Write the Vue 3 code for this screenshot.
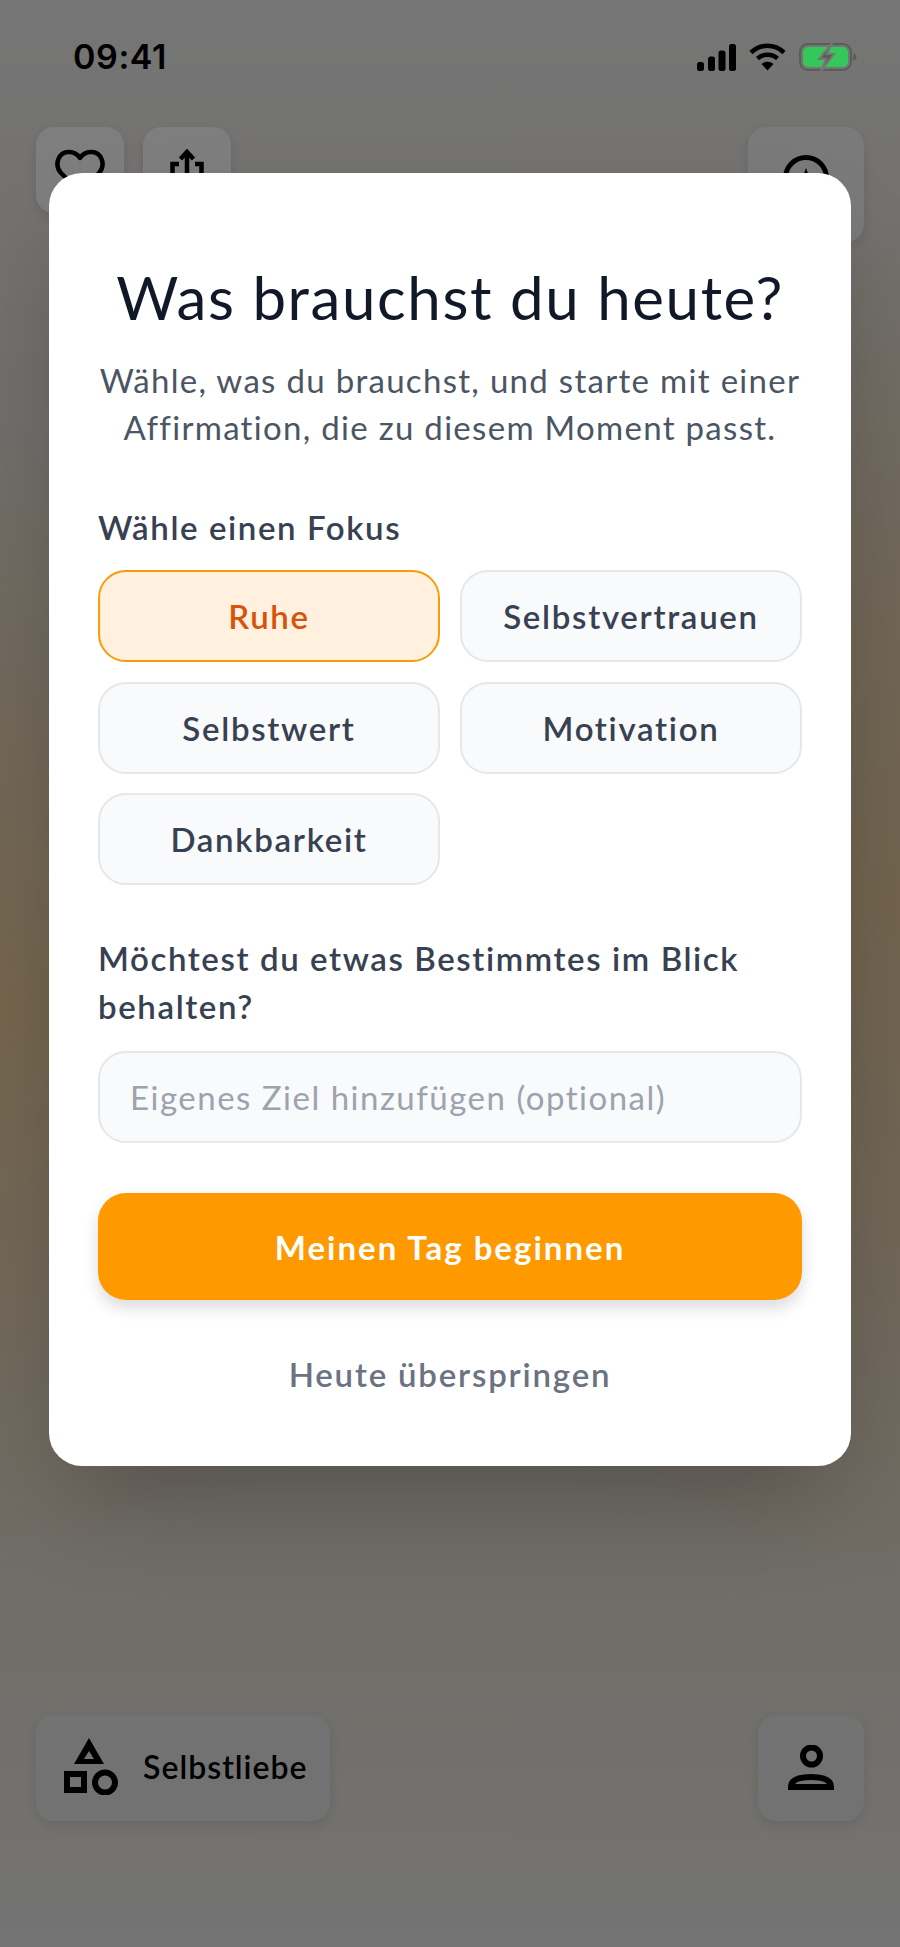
<template>
  <div class="screen">
    <!-- page behind the dialog -->
    <div class="page">
      <div class="status-bar">
        <span class="time">09:41</span>
        <div class="status-icons">
          <svg width="39" height="27" viewBox="0 0 39 27">
            <rect x="0" y="18" width="7" height="9" rx="2.5" />
            <rect x="11" y="12.500" width="7" height="14.500" rx="2.500" />
            <rect x="21.500" y="6.500" width="7" height="20.500" rx="2.500" />
            <rect x="32" y="0" width="7" height="27" rx="2.500" />
          </svg>
          <svg width="37" height="28" viewBox="0 0 37 28" fill="none" stroke="#000" stroke-width="4.500">
            <path d="M2 9.500 C11.500 0.500 25.500 0.500 35 9.500" />
            <path d="M8.500 15.500 C14 10.500 23 10.500 28.500 15.500" />
            <path d="M18.500 27.500 L12.500 21 C16 18 21 18 24.500 21 Z" fill="#000" stroke="none" />
          </svg>
          <svg width="58" height="28" viewBox="0 0 58 28">
            <rect x="1" y="1" width="51" height="26" rx="8" fill="none" stroke="#5c5c5c" stroke-width="2" />
            <rect x="4" y="4" width="45" height="20" rx="5" fill="#34c759" />
            <path d="M54 10 C56.500 11 57.500 12.500 57.500 14 C57.500 15.500 56.500 17 54 18 Z" fill="#5c5c5c" />
            <path d="M33 0 L20 16 L27 16 L22 28 L35 11 L28 11 Z" fill="#5c5c5c" stroke="#767676" stroke-width="2" />
          </svg>
        </div>
      </div>

      <div class="top-actions">
        <div class="left-actions">
          <button class="icon-btn square">
            <svg width="50" height="46" viewBox="0 0 50 46" fill="none" stroke="#000" stroke-width="4.500" stroke-linejoin="round">
              <path d="M25 43 L6 24 C-1 16 3 3 14 3 C19 3 23 6 25 9 C27 6 31 3 36 3 C47 3 51 16 44 24 Z" />
            </svg>
          </button>
          <button class="icon-btn square">
            <svg width="34" height="46" viewBox="0 0 34 46" fill="none" stroke="#000" stroke-width="4.500">
              <path d="M2.500 44 V15 H9 M25 15 H31.500 V44 H2.500" />
              <path d="M17 30 V4 M10.500 10 L17 3 L23.500 10" />
            </svg>
          </button>
        </div>
        <button class="icon-btn wide">
          <svg width="46" height="46" viewBox="0 0 46 46" fill="none" stroke="#000" stroke-width="5">
            <circle cx="23" cy="23" r="20.500" />
            <path d="M23 13 L27 24 H19 Z" fill="#000" stroke="none" />
          </svg>
        </button>
      </div>

      <div class="bottom-actions">
        <button class="topic-btn">
          <svg width="54" height="57" viewBox="0 0 54 57">
            <path fill-rule="evenodd" d="M25 0 L40 26 H10 Z M25 13 L20 21 H30 Z" />
            <rect x="3" y="36" width="17" height="16" fill="none" stroke="#000" stroke-width="6" />
            <circle cx="41" cy="44.500" r="10" fill="none" stroke="#000" stroke-width="6" />
          </svg>
          <span>Selbstliebe</span>
        </button>
        <button class="icon-btn profile">
          <svg width="46" height="46" viewBox="0 0 46 46" fill="none" stroke="#000" stroke-width="6">
            <circle cx="23.500" cy="11" r="8.500" />
            <path d="M3 42 C3 35 11 32 23 32 C35 32 43 35 43 42 Z" />
          </svg>
        </button>
      </div>
    </div>

    <!-- focus dialog -->
    <div class="overlay">
      <div class="dialog">
        <h1>Was brauchst du heute?</h1>
        <p class="intro">Wähle, was du brauchst, und starte mit einer Affirmation, die zu diesem Moment passt.</p>

        <div class="field-label">Wähle einen Fokus</div>
        <div class="chips">
          <button
            v-for="chip in chips"
            :key="chip"
            :class="['chip', { active: chip === selected }]"
            @click="selected = chip"
          >
            {{ chip }}
          </button>
        </div>

        <div class="field-label goal-label">Möchtest du etwas Bestimmtes im Blick behalten?</div>
        <input class="goal-input" type="text" placeholder="Eigenes Ziel hinzufügen (optional)" />

        <button class="start-btn">Meinen Tag beginnen</button>
        <button class="skip-btn">Heute überspringen</button>
      </div>
    </div>
  </div>
</template>

<script setup>
import { ref } from 'vue';

const chips = ['Ruhe', 'Selbstvertrauen', 'Selbstwert', 'Motivation', 'Dankbarkeit'];
const selected = ref('Ruhe');
</script>

<style>
html,
body {
  margin: 0;
  padding: 0;
}
</style>

<style scoped>
.screen {
  position: relative;
  width: 900px;
  height: 1947px;
  overflow: hidden;
  font-family: Lato, "Noto Sans", sans-serif;
  background:
    radial-gradient(ellipse 620px 560px at 0px 1010px, #eacb9c 0%, rgba(234, 203, 156, 0) 100%),
    radial-gradient(ellipse 700px 700px at 900px 900px, #e4c79c 0%, rgba(228, 199, 156, 0) 100%),
    linear-gradient(180deg, #ececec 0%, #e0dbd2 25%, #d9cfc0 50%, #e2ddd2 85%, #e8e8e8 100%);
}

.page {
  height: 100%;
  display: flex;
  flex-direction: column;
  box-sizing: border-box;
  padding: 0 36px 126px;
}

button {
  font-family: inherit;
  border: none;
  padding: 0;
}

.status-bar {
  position: relative;
  z-index: 2;
  height: 127px;
  display: flex;
  justify-content: space-between;
  align-items: flex-start;
  padding: 37px 0 0 37px;
  box-sizing: border-box;
}

.time {
  font-family: Inter, sans-serif;
  font-size: 34px;
  line-height: 40px;
  letter-spacing: 0.6px;
  font-weight: 600;
  color: #000;
}

.status-icons {
  display: flex;
  align-items: center;
  gap: 13px;
  padding: 6px 0 0 0;
  margin-right: 7px;
}

.status-icons svg {
  display: block;
}

.top-actions {
  display: flex;
  justify-content: space-between;
  align-items: flex-start;
}

.left-actions {
  display: flex;
  gap: 19px;
}

.icon-btn,
.topic-btn {
  display: flex;
  align-items: center;
  justify-content: center;
  border-radius: 18px;
  box-shadow: 0 4px 12px rgba(0, 0, 0, 0.1);
}

.icon-btn svg {
  display: block;
}

.square,
.wide {
  background: #fcfcfc;
  align-items: flex-start;
  box-sizing: border-box;
}

.square {
  width: 88px;
  height: 86px;
  padding-top: 22px;
}

.wide {
  width: 116px;
  height: 115px;
  padding-top: 28px;
  background: #f4f4f4;
}

.bottom-actions {
  margin-top: auto;
  display: flex;
  justify-content: space-between;
  height: 106px;
}

.topic-btn {
  width: 294px;
  height: 106px;
  justify-content: flex-start;
  box-sizing: border-box;
  padding-left: 28px;
  gap: 25px;
  background: #e4e5e6;
  font-size: 32px;
  letter-spacing: 1px;
  font-weight: 600;
  color: #000;
}

.topic-btn svg {
  display: block;
  margin-top: -3px;
}

.topic-btn span {
  margin-top: -3px;
}

.profile {
  width: 106px;
  height: 106px;
  background: #e4e5e6;
}

.overlay {
  position: absolute;
  inset: 0;
  background: rgba(0, 0, 0, 0.5);
}

.dialog {
  position: absolute;
  top: 173px;
  left: 49px;
  width: 802px;
  height: 1293px;
  box-sizing: border-box;
  padding: 89px 49px 0;
  background: #fff;
  border-radius: 33px;
  box-shadow: 0 50px 100px -24px rgba(0, 0, 0, 0.25);
  display: flex;
  flex-direction: column;
}

h1 {
  margin: 0;
  font-size: 60px;
  line-height: 70px;
  letter-spacing: 1.6px;
  font-weight: 400;
  color: #111827;
  text-align: center;
}

.intro {
  margin: 25px 0 0;
  font-size: 33px;
  line-height: 47px;
  letter-spacing: 1.3px;
  color: #4b5563;
  text-align: center;
}

.field-label {
  margin-top: 52px;
  font-size: 33px;
  line-height: 48px;
  letter-spacing: 1.6px;
  font-weight: 600;
  color: #374151;
}

.goal-label {
  margin-top: 49px;
}

.chips {
  margin-top: 19px;
  display: grid;
  grid-template-columns: 1fr 1fr;
  gap: 19.5px 20px;
}

.chip {
  height: 92px;
  box-sizing: border-box;
  background: #f9fafb;
  border: 2px solid #e5e7eb;
  border-radius: 28px;
  font-size: 33px;
  letter-spacing: 1.7px;
  font-weight: 600;
  color: #374151;
}

.chip.active {
  background: #fff1de;
  border-color: #f59e0b;
  color: #d9520a;
}

.goal-input {
  margin-top: 21px;
  height: 92px;
  box-sizing: border-box;
  padding: 0 30px;
  background: #f9fafb;
  border: 2px solid #e5e7eb;
  border-radius: 28px;
  font-family: inherit;
  font-size: 33px;
  letter-spacing: 1.5px;
  color: #374151;
  outline: none;
}

.goal-input::placeholder {
  color: #9ca3af;
  opacity: 1;
}

.start-btn {
  margin-top: 50px;
  height: 107px;
  background: #ff9900;
  border-radius: 28px;
  box-shadow: 0 8px 16px rgba(0, 0, 0, 0.14);
  font-size: 33px;
  letter-spacing: 2px;
  font-weight: 700;
  color: #fff;
}

.skip-btn {
  margin-top: 50px;
  background: none;
  font-size: 33px;
  line-height: 48px;
  letter-spacing: 1.8px;
  font-weight: 600;
  color: #6b7280;
}
</style>
